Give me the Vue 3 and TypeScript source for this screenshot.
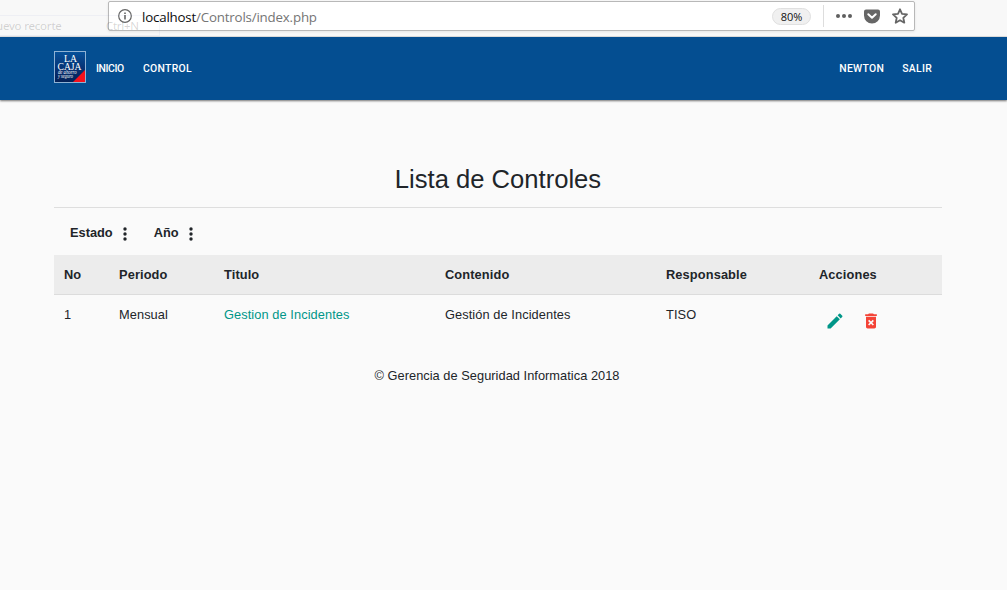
<script setup lang="ts">
interface Control {
  id: number
  period: string
  title: string
  content: string
  owner: string
}

const filters: string[] = ['Estado', 'Año']
const columns: string[] = ['No', 'Periodo', 'Titulo', 'Contenido', 'Responsable', 'Acciones']
const controls: Control[] = [
  { id: 1, period: 'Mensual', title: 'Gestion de Incidentes', content: 'Gestión de Incidentes', owner: 'TISO' },
]
</script>

<template>
  <div class="page">
    <header class="browser">
      <div class="ghost"><span class="ghost-label">uevo recorte</span><span class="ghost-key">Ctrl+N</span></div>
      <div class="address">
        <svg class="info" viewBox="0 0 14 14" width="14" height="14">
          <circle cx="7" cy="7" r="6.3" fill="none" stroke="#666" stroke-width="1.2" />
          <path d="M6.2 6h1.6v4.5H6.2zM6.2 3.4h1.6V5H6.2z" fill="#666" />
        </svg>
        <span class="url"><b>localhost</b>/Controls/index.php</span>
        <span class="zoom">80%</span>
        <i class="divider"></i>
        <svg class="dots" viewBox="0 0 16 4" width="16" height="4" fill="#5f5f5f">
          <circle cx="2" cy="2" r="2" /><circle cx="8" cy="2" r="2" /><circle cx="14" cy="2" r="2" />
        </svg>
        <svg class="pocket" viewBox="0 0 16 15" width="16" height="15">
          <path d="M2 .5h12a2 2 0 0 1 2 2V6.500a8 8 0 0 1-16 0V2.500a2 2 0 0 1 2-2z" fill="#666" />
          <path d="M4.300 5.300 8 8.800l3.700-3.500" fill="none" stroke="#fff" stroke-width="2" stroke-linecap="round" stroke-linejoin="round" />
        </svg>
        <svg class="star" viewBox="0 0 16 16" width="16" height="16">
          <path d="M8 1.300 10 5.800l5 .6-3.700 3.400 1 4.900L8 12.200l-4.300 2.500 1-4.900L1 6.400l5-.6z" fill="none" stroke="#666" stroke-width="1.800" stroke-linejoin="round" />
        </svg>
      </div>
    </header>

    <nav class="navbar">
      <svg class="logo" viewBox="0 0 32 32" width="32" height="32">
        <defs>
          <linearGradient id="logo-bg" x1="0" y1="0" x2="0" y2="1">
            <stop offset="0" stop-color="#07529b" /><stop offset=".6" stop-color="#062f70" /><stop offset="1" stop-color="#042056" />
          </linearGradient>
        </defs>
        <rect x=".5" y=".5" width="31" height="31" fill="url(#logo-bg)" stroke="#8fb2d4" />
        <path d="M31 19v12H19z" fill="#f5101c" />
        <g fill="#fff" font-family="Liberation Serif, serif">
          <text x="10" y="11.300" font-size="10" textLength="13" lengthAdjust="spacingAndGlyphs">LA</text>
          <text x="3.500" y="18.500" font-size="10" textLength="24" lengthAdjust="spacingAndGlyphs">CAJA</text>
          <g font-size="5.200" font-style="italic">
            <text x="4" y="23.300" textLength="18.500" lengthAdjust="spacingAndGlyphs">de ahorro</text>
            <text x="4" y="27.300" textLength="15" lengthAdjust="spacingAndGlyphs">y seguro</text>
          </g>
        </g>
      </svg>
      <a class="link inicio">INICIO</a>
      <a class="link control">CONTROL</a>
      <a class="link user">NEWTON</a>
      <a class="link exit">SALIR</a>
    </nav>

    <main class="content">
      <h1>Lista de Controles</h1>
      <div class="filters">
        <div v-for="name in filters" :key="name" class="filter">
          <span>{{ name }}</span>
          <svg viewBox="0 0 4 14" width="4" height="14" fill="#212529">
            <circle cx="2" cy="2" r="1.700" /><circle cx="2" cy="7" r="1.700" /><circle cx="2" cy="12" r="1.700" />
          </svg>
        </div>
      </div>
      <div class="row head">
        <span v-for="c in columns" :key="c">{{ c }}</span>
      </div>
      <div v-for="item in controls" :key="item.id" class="row">
        <span>{{ item.id }}</span>
        <span>{{ item.period }}</span>
        <a class="title-link">{{ item.title }}</a>
        <span>{{ item.content }}</span>
        <span>{{ item.owner }}</span>
        <div class="actions">
          <svg viewBox="0 0 24 24" width="20" height="20" fill="#009688">
            <path d="M3 17.250V21h3.750L17.810 9.940l-3.750-3.750L3 17.250zM20.710 7.040a1 1 0 0 0 0-1.410l-2.340-2.340a1 1 0 0 0-1.410 0l-1.830 1.830 3.750 3.750 1.830-1.830z" />
          </svg>
          <svg viewBox="0 0 24 24" width="20" height="20" fill="#f44336">
            <path fill-rule="evenodd" d="M6 19c0 1.100.9 2 2 2h8c1.100 0 2-.9 2-2V7H6v12zm2.460-7.120 1.410-1.410L12 12.590l2.120-2.120 1.410 1.410L13.410 14l2.120 2.120-1.410 1.410L12 15.410l-2.120 2.120-1.410-1.410L10.590 14l-2.130-2.120zM15.500 4l-1-1h-5l-1 1H5v2h14V4z" />
          </svg>
        </div>
      </div>
      <footer>© Gerencia de Seguridad Informatica 2018</footer>
    </main>
  </div>
</template>

<style>
body { margin: 0; background: #fafafa; }
</style>

<style scoped>
.page { width: 1007px; height: 590px; overflow: hidden; background: #fafafa; color: #212529; font-family: "Liberation Sans", Arial, sans-serif; font-size: 12.8px; }
.browser { position: relative; height: 37px; box-sizing: border-box; padding: 1px 0 0 108px; background: #f8f8f8; border-bottom: 1px solid #e3e3e3; }
.address { display: flex; align-items: center; box-sizing: border-box; width: 807px; height: 30px; padding: 0 6px 0 9px; background: #fff; border: 1px solid #b8b8b8; border-radius: 2px; box-shadow: 0 1px 3px rgba(0, 0, 0, .08); }
.ghost { position: absolute; left: 0; top: 15px; display: flex; width: 160px; height: 21px; box-sizing: border-box; border: solid rgba(90, 100, 180, .06); border-width: 1px 1px 1px 0; pointer-events: none; font: 11.500px/20px "Noto Sans", sans-serif; color: rgba(0, 0, 0, .17); white-space: nowrap; }
.ghost-label { width: 110px; margin-left: -4px; letter-spacing: -.2px; }
.ghost-key { letter-spacing: -.3px; }
.url { margin-left: 10px; padding-top: 1px; color: #757575; font: 13.300px/20px "Open Sans", sans-serif; letter-spacing: -.18px; white-space: nowrap; }
.url b { color: #0c0c0d; font-weight: 400; }
.zoom { box-sizing: border-box; margin-left: auto; width: 39px; height: 17px; border: 1px solid #e0e0e0; border-radius: 9px; background: #f0f0f0; text-align: center; color: #111; font: 11px/15px "Open Sans", sans-serif; }
.divider { width: 1px; height: 22px; margin: 0 12px; background: #ddd; }
.pocket { margin-left: 12px; }
.star { margin-left: 12px; }
.navbar { position: relative; display: flex; align-items: center; box-sizing: border-box; height: 63px; padding: 0 75px 3px 54px; background: #044e91; box-shadow: 0 1px 2px rgba(0, 0, 0, .55); }
.link { padding-top: 3px; color: #fff; font: 500 10.400px/16px Roboto, sans-serif; }
.inicio { margin-left: 10px; width: 47px; letter-spacing: -.4px; }
.control { letter-spacing: .3px; }
.user { margin-left: auto; letter-spacing: .3px; }
.exit { margin-left: 18px; letter-spacing: .3px; }
.content { width: 888px; margin-left: 54px; padding-top: 60px; }
h1 { margin: 0; height: 47px; border-bottom: 1px solid #dedede; text-align: center; font-size: 25.600px; line-height: 38px; font-weight: 400; }
.filters { display: flex; gap: 27px; height: 47px; padding-left: 16px; box-sizing: border-box; font-weight: 700; }
.filter { display: flex; gap: 10px; }
.filter span { padding-top: 17px; line-height: 16px; }
.filter svg { margin-top: 19px; }
.row { display: grid; grid-template-columns: 55px 105px 221px 221px 153px 1fr; padding: 12px 0 0 10px; height: 48px; box-sizing: border-box; line-height: 16px; letter-spacing: .08px; }
.head { height: 40px; background: #ececec; border-bottom: 1px solid #dcdcdc; font-weight: 700; letter-spacing: .12px; }
.title-link { color: #009688; }
.actions { display: flex; gap: 16px; padding: 4px 0 0 6px; }
footer { margin: 25px 1px 0 -1px; text-align: center; line-height: 16px; letter-spacing: .04px; }
</style>
